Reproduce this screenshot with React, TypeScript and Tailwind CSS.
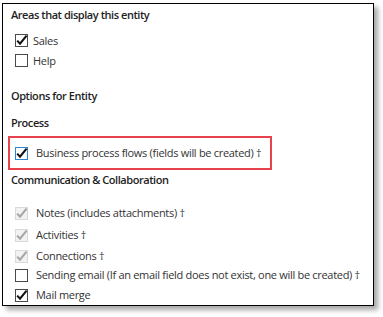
import React from 'react'

type BoxState = 'checked' | 'unchecked' | 'focused' | 'disabled'

function CheckBox({ state }: { state: BoxState }) {
	const box =
		state === 'focused'
			? 'border-[#2f86d0] bg-white'
			: state === 'disabled'
				? 'border-[#dadada] bg-[#f2f2f2]'
				: 'border-[#4a4a4a] bg-white'
	const stroke = state === 'disabled' ? '#a6a6a6' : '#111'
	return (
		<span className={`relative inline-block w-[13px] h-[13px] border shrink-0 ${box}`}>
			{state !== 'unchecked' && (
				<svg
					viewBox="0 0 13 13"
					className="absolute left-[-1px] top-[-1px] w-[13px] h-[13px] overflow-visible"
				>
					<path d="M2.2 6.6 L5 9.6 L11.6 1.6" fill="none" stroke={stroke} strokeWidth="2.1" />
				</svg>
			)}
		</span>
	)
}

function Row({
	state,
	label,
	gap = 'gap-[5px]',
	height = 'h-[20px]',
}: {
	state: BoxState
	label: string
	gap?: string
	height?: string
}) {
	return (
		<div className={`flex items-center pl-[12px] ${gap} ${height}`}>
			<CheckBox state={state} />
			<span className="text-[11px] tracking-[-0.3px] text-[#333] whitespace-nowrap">{label}</span>
		</div>
	)
}

function Heading({ children, className = '' }: { children: React.ReactNode; className?: string }) {
	return (
		<div
			className={`pl-[8px] flex items-center text-[11px] tracking-[-0.45px] font-semibold text-[#1e1e1e] whitespace-nowrap ${className}`}
		>
			{children}
		</div>
	)
}

export default function App() {
	return (
		<div
			className="w-[383px] h-[317px] bg-white pl-[2px] pt-[3px]"
			style={{ fontFamily: '"Open Sans", "Noto Sans", sans-serif' }}
		>
			<div className="w-[372px] h-[303px] border border-black bg-white shadow-[4px_4px_5px_rgba(0,0,0,0.35)] flex flex-col">
				<Heading className="h-[22px]">Areas that display this entity</Heading>
				<div className="mt-[5px]">
					<Row state="checked" label="Sales" />
					<Row state="unchecked" label="Help" />
				</div>
				<Heading className="h-[22px] mt-[15px]">Options for Entity</Heading>
				<Heading className="h-[22px] mt-[5px]">Process</Heading>
				<div className="mt-[2px] ml-[5px] w-[264px] h-[34px] border-2 border-[#e8424c] flex items-center pl-[5px] gap-[8px]">
					<CheckBox state="focused" />
					<span className="text-[11px] tracking-[-0.3px] text-[#333] whitespace-nowrap">
						Business process flows (fields will be created) †
					</span>
				</div>
				<Heading className="h-[18px] mt-[1px]">Communication &amp; Collaboration</Heading>
				<div className="mt-[13px]">
					<Row state="disabled" label="Notes (includes attachments) †" gap="gap-[8px]" height="h-[22px]" />
					<Row state="disabled" label="Activities †" gap="gap-[8px]" height="h-[22px]" />
					<Row state="disabled" label="Connections †" gap="gap-[8px]" height="h-[20px]" />
					<Row
						state="unchecked"
						label="Sending email (If an email field does not exist, one will be created) †"
						gap="gap-[8px]"
						height="h-[19px]"
					/>
					<Row state="checked" label="Mail merge" gap="gap-[8px]" height="h-[20px]" />
				</div>
			</div>
		</div>
	)
}
